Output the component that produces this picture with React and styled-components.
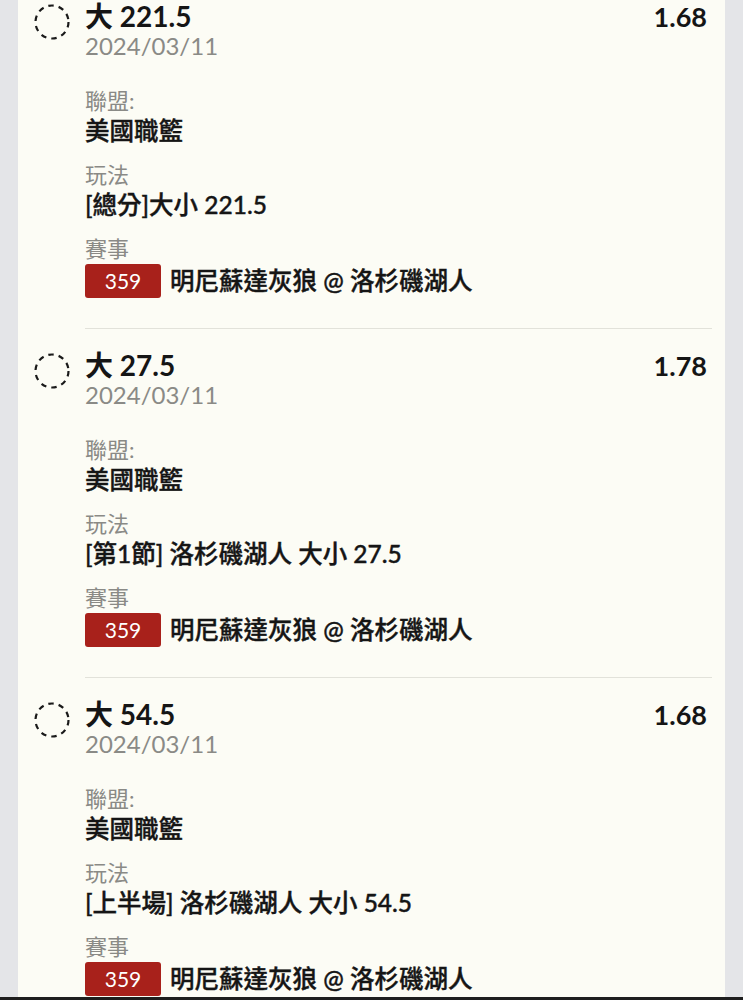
import styled, { createGlobalStyle } from "styled-components"

const GlobalStyle = createGlobalStyle`
    html, body {
        margin: 0;
        padding: 0;
        background: #e4e5e8;
        font-family: Lato, "Noto Sans CJK TC", sans-serif;
        color: #151515;
    }
`

const Page = styled.div`
    padding: 0 18px;
    min-height: 100vh;
`

const Panel = styled.div`
    background: #fcfcf5;
    min-height: 100vh;
    padding: 1px 13px 0 16px;
    box-sizing: border-box;
`

const Item = styled.div`
    display: grid;
    grid-template-columns: 35px 1fr;
    column-gap: 16px;
    margin-bottom: 21px;
`

const Check = styled.div`
    padding-top: 3px;
`

const Body = styled.div`
    padding-bottom: 30px;
    border-bottom: 1px solid #e2e2da;
`

const Head = styled.div`
    display: flex;
    justify-content: space-between;
    align-items: baseline;
    padding-right: 5px;
`

const Title = styled.div`
    font-size: 28px;
    line-height: 30px;
    font-weight: 700;
`

const Odds = styled.div`
    font-size: 27px;
    line-height: 30px;
    font-weight: 700;
`

const DateText = styled.div`
    font-size: 24px;
    line-height: 28px;
    color: #8a8a86;
`

const Fields = styled.div`
    display: flex;
    flex-direction: column;
    gap: 14px;
    margin-top: 26px;
`

const Label = styled.div`
    font-size: 22px;
    line-height: 30px;
    color: #8a8a86;
`

const Value = styled.div`
    font-size: 24.5px;
    line-height: 30px;
    font-weight: 500;
    -webkit-text-stroke: 0.4px currentColor;
    display: flex;
    align-items: center;
`

const Badge = styled.span`
    display: inline-flex;
    align-items: center;
    justify-content: center;
    width: 76px;
    height: 34px;
    background: #a8211b;
    color: #fff;
    border-radius: 3px;
    font-size: 21px;
    font-weight: 400;
    -webkit-text-stroke: 0;
    margin-right: 9px;
`

const MatchRow = styled(Value)`
    height: 34px;
`

const BottomEdge = styled.div`
    position: fixed;
    left: 0;
    right: 0;
    bottom: 0;
    height: 3px;
    background: #1e1e1e;
`

function DashedCircle() {
    return (
        <svg width="36" height="36" viewBox="0 0 36 36">
            <circle cx="18" cy="18" r="16.5" fill="none" stroke="#1a1a1a" strokeWidth="2.2" strokeDasharray="5.5 5" />
        </svg>
    )
}

const bets = [
    { title: "大 221.5", odds: "1.68", play: "[總分]大小 221.5" },
    { title: "大 27.5", odds: "1.78", play: "[第1節] 洛杉磯湖人 大小 27.5" },
    { title: "大 54.5", odds: "1.68", play: "[上半場] 洛杉磯湖人 大小 54.5" },
]

export default function App() {
    return (
        <>
        <GlobalStyle />
        <Page>
            <Panel>
                {bets.map(({ title, odds, play }) => (
                    <Item key={play}>
                        <Check><DashedCircle /></Check>
                        <Body>
                            <Head>
                                <Title>{title}</Title>
                                <Odds>{odds}</Odds>
                            </Head>
                            <DateText>2024/03/11</DateText>
                            <Fields>
                                <div>
                                    <Label>聯盟:</Label>
                                    <Value>美國職籃</Value>
                                </div>
                                <div>
                                    <Label>玩法</Label>
                                    <Value>{play}</Value>
                                </div>
                                <div>
                                    <Label>賽事</Label>
                                    <MatchRow><Badge>359</Badge>明尼蘇達灰狼 @ 洛杉磯湖人</MatchRow>
                                </div>
                            </Fields>
                        </Body>
                    </Item>
                ))}
            </Panel>
        </Page>
        <BottomEdge />
        </>
    )
}
